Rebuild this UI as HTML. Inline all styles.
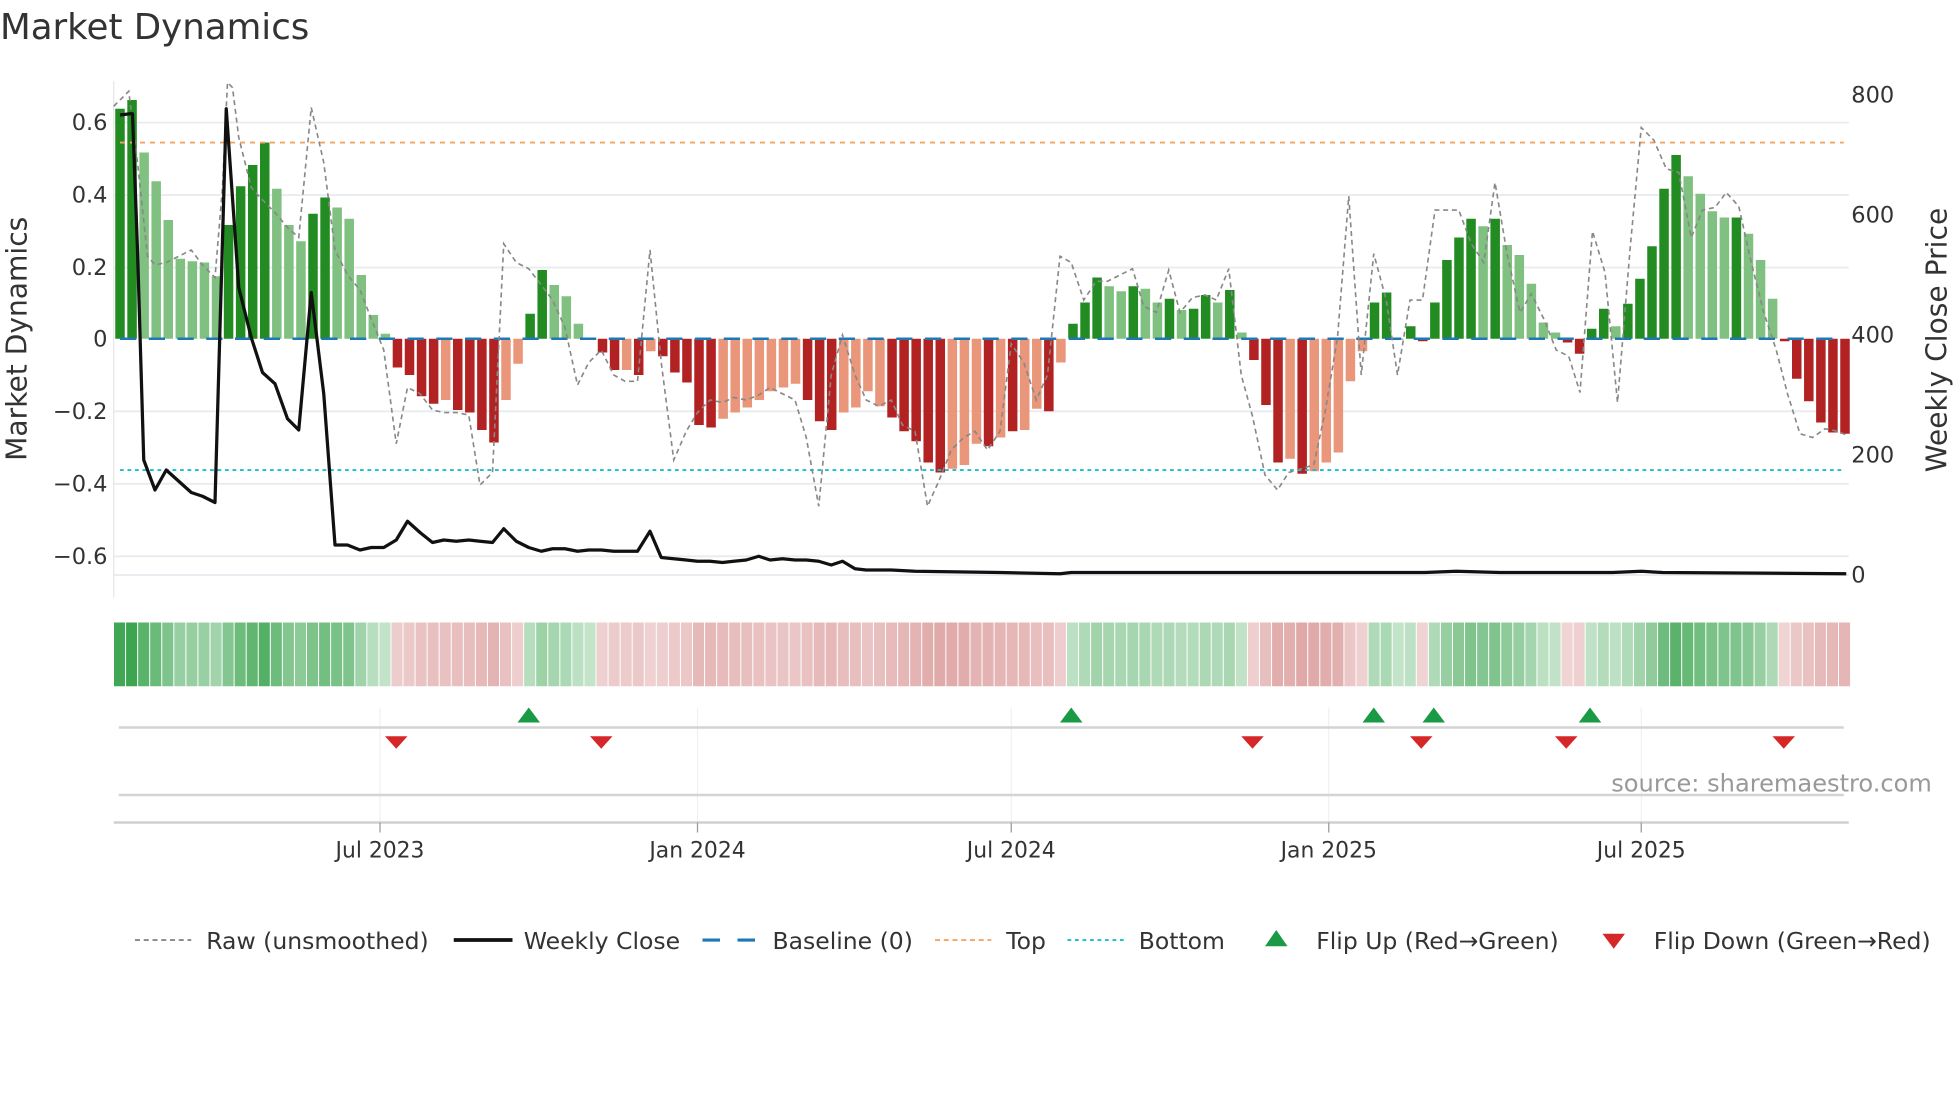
<!DOCTYPE html>
<html><head><meta charset="utf-8"><style>
html,body{margin:0;padding:0;background:#fff;}
svg{display:block;}
text{font-family:"DejaVu Sans","Liberation Sans",sans-serif;fill:#333;}
</style></head><body>
<svg id="s" width="1960" height="1102" viewBox="0 0 1568 881.6" xmlns="http://www.w3.org/2000/svg">
<text x="0" y="31" font-size="28.5">Market Dynamics</text>
<g stroke="#e8ecf0" stroke-width="1.5">
<line x1="91" y1="98" x2="1479" y2="98"/><line x1="91" y1="156" x2="1479" y2="156"/><line x1="91" y1="214" x2="1479" y2="214"/><line x1="91" y1="329" x2="1479" y2="329"/><line x1="91" y1="387" x2="1479" y2="387"/><line x1="91" y1="445" x2="1479" y2="445"/><line x1="91" y1="460" x2="1479" y2="460"/>
</g>
<line x1="91" y1="65" x2="91" y2="478" stroke="#e6e6e6" stroke-width="1"/>
<g font-size="18" text-anchor="end">
<text x="86" y="104">0.6</text><text x="86" y="162">0.4</text><text x="86" y="220">0.2</text><text x="86" y="277">0</text><text x="86" y="335">−0.2</text><text x="86" y="393">−0.4</text><text x="86" y="451">−0.6</text>
</g>
<g font-size="18">
<text x="1481" y="82">800</text><text x="1481" y="178">600</text><text x="1481" y="274">400</text><text x="1481" y="370">200</text><text x="1481" y="466">0</text>
</g>
<text transform="translate(21,271) rotate(-90)" font-size="22.5" text-anchor="middle">Market Dynamics</text>
<text transform="translate(1557,272) rotate(-90)" font-size="22.5" text-anchor="middle">Weekly Close Price</text>
<g id="bars"></g>
<line x1="96" y1="114" x2="1475" y2="114" stroke="#f4a460" stroke-width="1.5" stroke-dasharray="4,4"/>
<line x1="96" y1="376" x2="1475" y2="376" stroke="#17becf" stroke-width="1.5" stroke-dasharray="3,3"/>
<line x1="96" y1="271" x2="1475" y2="271" stroke="#1f77b4" stroke-width="2" stroke-dasharray="13,10"/>
<polyline id="raw" fill="none" stroke="#888" stroke-width="1.3" stroke-dasharray="4,3" points="91,85 103,73 110,130 118,205 124,212 133,210 143,205 153,200 162,212 172,222 178,150 182,66 186,70 191,110 201,150 210,160 220,170 230,182 239,190 249,86 259,130 268,200 278,220 288,232 297,255 307,280 317,355 326,310 336,315 346,328 355,330 365,330 375,332 384,388 394,378 403,195 413,210 423,215 433,228 442,240 452,262 462,308 471,290 481,280 491,300 500,305 510,305 520,200 529,290 539,368 549,345 558,330 568,320 578,322 587,318 597,320 607,316 616,310 626,315 636,320 645,350 655,405 665,300 674,268 684,300 693,320 703,325 713,320 722,340 732,345 742,405 751,385 761,360 771,350 780,345 790,360 800,345 809,275 819,290 829,320 838,300 848,205 857,210 867,240 877,225 886,225 896,220 906,215 915,245 925,250 935,216 944,250 954,238 964,236 973,240 983,215 993,300 1002,333 1012,380 1022,392 1031,378 1041,375 1051,372 1060,330 1070,270 1079,157 1089,300 1099,203 1109,240 1118,300 1128,240 1138,240 1148,168 1157,168 1167,168 1177,195 1187,210 1196,146 1206,205 1216,250 1225,235 1235,255 1245,280 1255,285 1264,314 1274,185 1284,218 1294,322 1304,200 1313,102 1323,112 1333,135 1343,138 1353,190 1362,168 1372,166 1381,154 1391,165 1401,210 1411,250 1421,280 1430,315 1440,347 1450,350 1460,343 1470,345 1477,348"/>
<polyline fill="none" stroke="#111" stroke-width="2.6" stroke-linejoin="round" points="96,92 104,91 106,91 110,200 115,368 124,392 133,376 143,385 153,394 162,397 172,402 181,87 191,230 201,270 210,298 220,307 230,335 239,344 249,234 259,315 268,436 278,436 288,440 297,438 307,438 317,432 326,417 336,426 346,434 355,432 365,433 375,432 384,433 394,434 403,423 413,433 423,438 433,441 442,439 452,439 462,441 471,440 481,440 491,441 500,441 510,441 520,425 529,446 539,447 549,448 558,449 568,449 578,450 587,449 597,448 607,445 616,448 626,447 636,448 645,448 655,449 665,452 674,449 684,455 693,456 713,456 732,457 800,458 848,459 857,458 1000,458 1140,458 1165,457 1200,458 1290,458 1313,457 1330,458 1477,459"/>
<g id="heat"></g>
<g stroke="#edf1f4" stroke-width="1">
<line x1="304" y1="566" x2="304" y2="658"/><line x1="558" y1="566" x2="558" y2="658"/><line x1="809" y1="566" x2="809" y2="658"/><line x1="1063" y1="566" x2="1063" y2="658"/><line x1="1313" y1="566" x2="1313" y2="658"/>
</g>
<line x1="95" y1="582" x2="1475" y2="582" stroke="#d4d4d4" stroke-width="2"/>
<line x1="95" y1="636" x2="1475" y2="636" stroke="#d4d4d4" stroke-width="2"/>
<line x1="91" y1="658" x2="1479" y2="658" stroke="#d0d0d0" stroke-width="2"/>
<g stroke="#999" stroke-width="1"><line x1="304" y1="658" x2="304" y2="666"/><line x1="558" y1="658" x2="558" y2="666"/><line x1="809" y1="658" x2="809" y2="666"/><line x1="1063" y1="658" x2="1063" y2="666"/><line x1="1313" y1="658" x2="1313" y2="666"/></g>
<g fill="#1a9a44"><path d="M414,578 L423,566 L432,578Z"/><path d="M848,578 L857,566 L866,578Z"/><path d="M1090,578 L1099,566 L1108,578Z"/><path d="M1138,578 L1147,566 L1156,578Z"/><path d="M1263,578 L1272,566 L1281,578Z"/></g>
<g fill="#d62728"><path d="M308,589 L326,589 L317,599Z"/><path d="M472,589 L490,589 L481,599Z"/><path d="M993,589 L1011,589 L1002,599Z"/><path d="M1128,589 L1146,589 L1137,599Z"/><path d="M1244,589 L1262,589 L1253,599Z"/><path d="M1418,589 L1436,589 L1427,599Z"/></g>
<text x="1289" y="633" font-size="19.3" style="fill:#999">source: sharemaestro.com</text>
<g font-size="17.5" text-anchor="middle"><text x="304" y="686">Jul 2023</text><text x="558" y="686">Jan 2024</text><text x="809" y="686">Jul 2024</text><text x="1063" y="686">Jan 2025</text><text x="1313" y="686">Jul 2025</text></g>
<g font-size="18.8">
<line x1="108" y1="752" x2="153" y2="752" stroke="#888" stroke-width="1.5" stroke-dasharray="4,3"/><text x="165" y="759">Raw (unsmoothed)</text>
<line x1="363" y1="752" x2="410" y2="752" stroke="#111" stroke-width="3"/><text x="419" y="759">Weekly Close</text>
<line x1="562" y1="752" x2="607" y2="752" stroke="#1f77b4" stroke-width="2.5" stroke-dasharray="14,14"/><text x="618" y="759">Baseline (0)</text>
<line x1="748" y1="752" x2="793" y2="752" stroke="#f4a460" stroke-width="1.5" stroke-dasharray="4,3"/><text x="805" y="759">Top</text>
<line x1="854" y1="752" x2="899" y2="752" stroke="#17becf" stroke-width="1.5" stroke-dasharray="3,3"/><text x="911" y="759">Bottom</text>
<path d="M1012,757 L1021,744 L1030,757Z" fill="#1a9a44"/><text x="1053" y="759">Flip Up (Red→Green)</text>
<path d="M1282,747 L1300,747 L1291,759Z" fill="#d62728"/><text x="1323" y="759">Flip Down (Green→Red)</text>
</g>
</svg>
<script>
var d="87D 80D 122L 145L 176L 207L 209L 210L 221L 180D 149D 132D 114D 151L 180L 193L 171D 158D 166L 175L 220L 252L 267L 294R 300R 317R 323R 320S 328R 330R 344R 354R 320S 291S 251D 216D 228L 237L 259L 270L 282R 296R 296S 300R 281S 285R 298R 306R 340R 342R 335S 330S 326S 320S 313S 310S 307S 320R 337R 344R 330S 326S 313S 325S 334R 345R 353R 370R 378R 375S 372S 355S 357R 350S 345R 344S 327S 329R 290S 259D 242D 222D 229L 233L 229D 231L 242L 239D 248L 247D 236D 242L 232D 266L 288R 324R 370R 367S 379R 377S 370S 362S 305S 281S 242D 234D 271D 261D 273R 242D 208D 190D 175D 181L 175D 196L 204L 227L 258L 266L 274R 283R 263D 247D 261L 243D 223D 197D 151D 124D 141L 155L 169L 174L 174D 187L 208L 239L 273R 303R 321R 338R 346R 347R".split(" ");
var C={D:"#228b22",L:"#80c080",R:"#b22222",S:"#e9967a"};
var ns="http://www.w3.org/2000/svg",b=document.getElementById("bars"),h=document.getElementById("heat");
var n=d.length,step=(1476-96)/(n-1);
for(var i=0;i<n;i++){var v=parseFloat(d[i]),c=d[i].slice(-1),x=96+i*step;
var r=document.createElementNS(ns,"rect");var y0=Math.min(v,271),hh=Math.abs(v-271);
r.setAttribute("x",x-3.8);r.setAttribute("width",7.6);r.setAttribute("y",y0);r.setAttribute("height",Math.max(hh,0.5));r.setAttribute("fill",C[c]);b.appendChild(r);
var g=document.createElementNS(ns,"rect");g.setAttribute("x",x-4.8);g.setAttribute("width",step-0.8);g.setAttribute("y",498);g.setAttribute("height",51);
var pos=(c=="D"||c=="L"),a=Math.min(1,Math.abs(271-v)/190);
var al=0.3+0.7*a;
g.setAttribute("fill",pos?"rgb(60,165,80)":"rgb(205,115,115)");g.setAttribute("fill-opacity",pos?al:(0.3+0.55*a));h.appendChild(g);}
</script>
</body></html>
